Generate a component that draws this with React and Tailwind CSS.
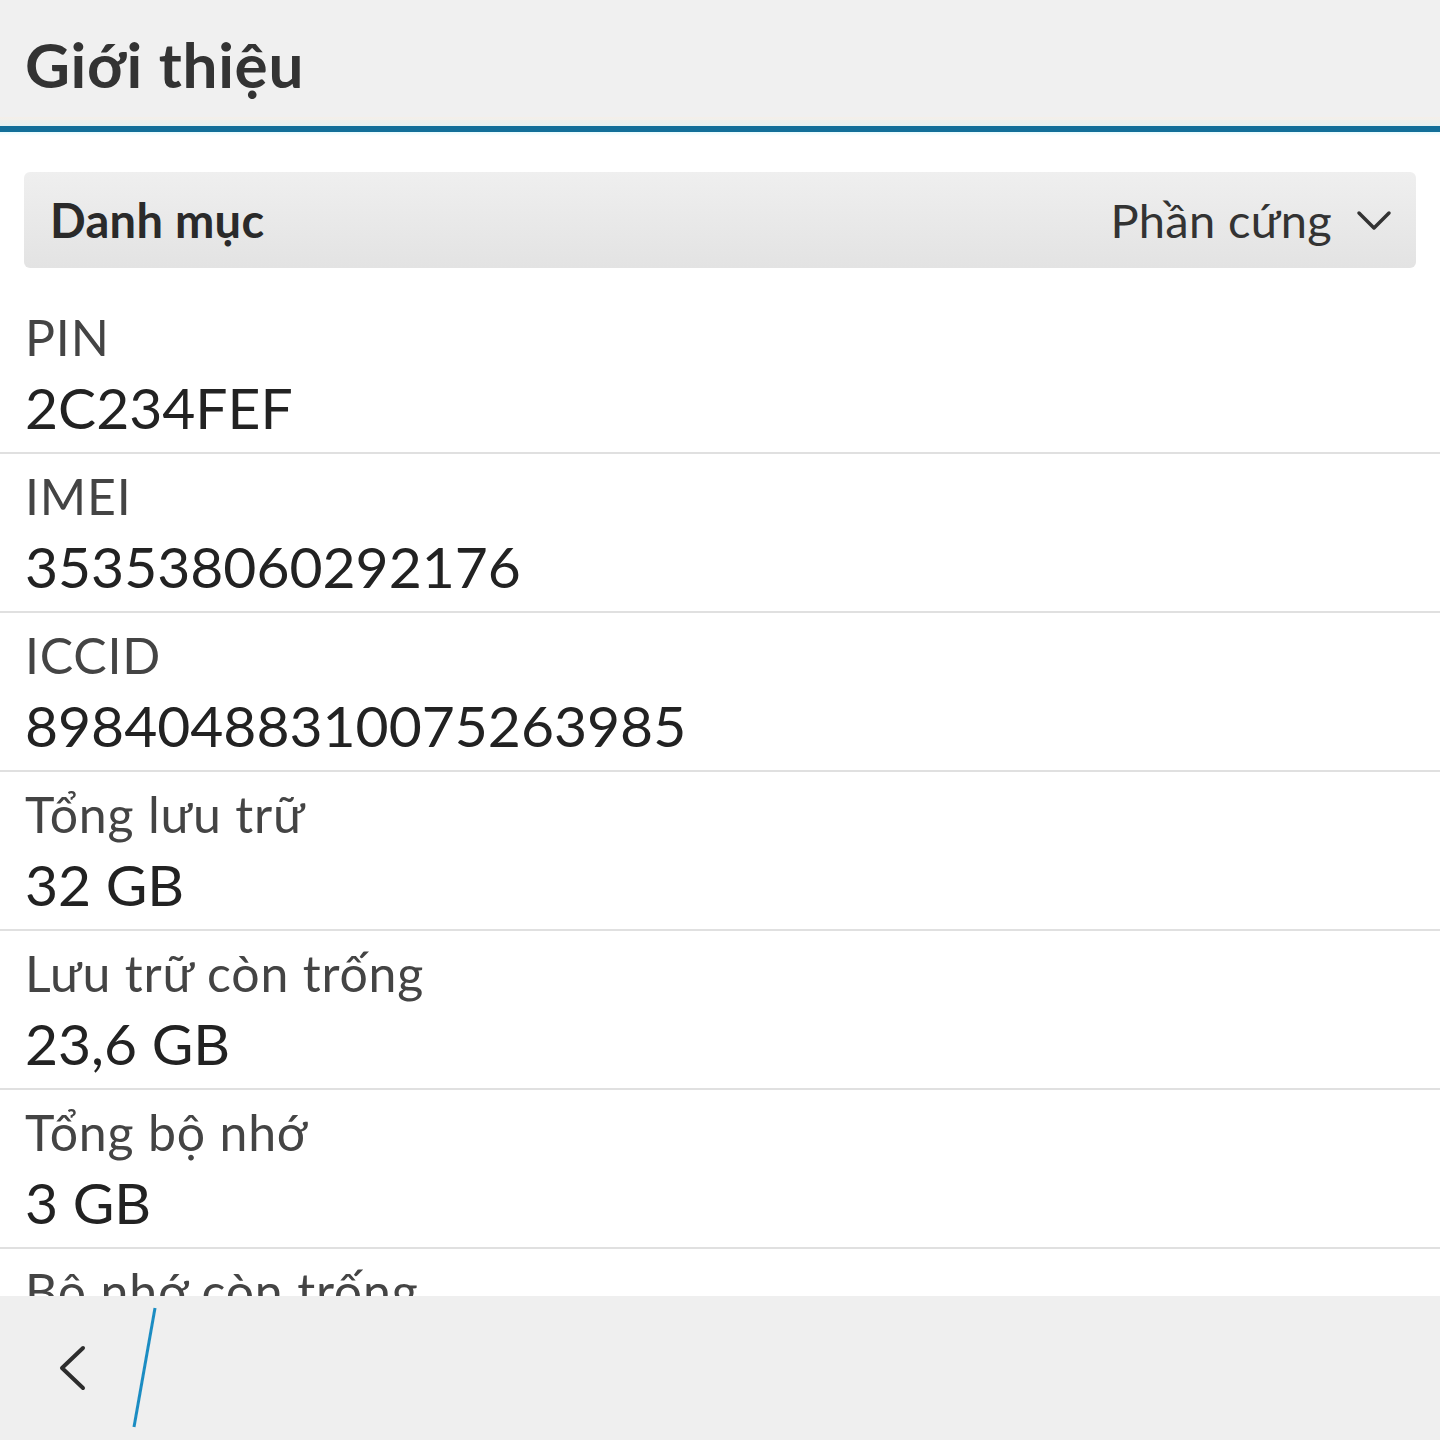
import React from "react";

const rows = [
  ["PIN", "2C234FEF"],
  ["IMEI", "353538060292176"],
  ["ICCID", "89840488310075263985"],
  ["Tổng lưu trữ", "32 GB"],
  ["Lưu trữ còn trống", "23,6 GB"],
  ["Tổng bộ nhớ", "3 GB"],
  ["Bộ nhớ còn trống", "1,2 GB"],
];

export default function App() {
  return (
    <div className="w-[1440px] h-[1440px] flex flex-col bg-white font-['Lato','Open_Sans',sans-serif] overflow-hidden">
      <div className="h-[117px] shrink-0 bg-[#f0f0f0] flex items-start pl-[25px] pt-[33px]">
        <h1 className="text-[62px] font-bold text-[#333333] leading-none tracking-[0.7px]">Giới thiệu</h1>
      </div>
      <div className="h-[9px] shrink-0 bg-gradient-to-b from-[#f5efe9] to-[#e6f2f2]" />
      <div className="h-[6px] shrink-0 bg-[#136f99]" />
      <div className="h-[4px] shrink-0 bg-gradient-to-b from-[#e8fbfd] to-white" />
      <div className="flex-1 min-h-0 overflow-hidden flex flex-col pt-[36px]">
        <div className="shrink-0 mx-[24px] h-[96px] rounded-[6px] bg-gradient-to-b from-[#efefef] to-[#e3e3e3] flex items-center pl-[26px] pr-[24px]">
          <span className="text-[47px] font-bold text-[#2a2a2a] leading-none tracking-[0.3px]">Danh mục</span>
          <span className="ml-auto text-[47px] text-[#333333] leading-none tracking-[0.3px]">Phần cứng</span>
          <svg width="36" height="30" viewBox="0 0 36 30" className="ml-[24px]">
            <path d="M3 8 L18 23 L33 8" fill="none" stroke="#333" strokeWidth="3.5" strokeLinecap="round" strokeLinejoin="round" />
          </svg>
        </div>
        <div className="shrink-0 mt-[25px]">
          {rows.map(([label, value], i) => (
            <div
              key={label}
              className={`h-[159px] shrink-0 flex flex-col pl-[25px] border-t-2 ${i > 0 ? "border-[#e0e0e0]" : "border-transparent"}`}
            >
              <div className="text-[50px] text-[#444444] leading-none mt-[17px] tracking-[0.8px] whitespace-nowrap">{label}</div>
              <div className="text-[57px] text-[#222222] leading-none mt-[17px] whitespace-nowrap">{value}</div>
            </div>
          ))}
        </div>
      </div>
      <div className="h-[144px] shrink-0 bg-[#efefef] flex items-center relative">
        <svg width="40" height="60" viewBox="0 0 40 60" className="ml-[52px]">
          <path d="M31 10 L10 30 L31 50" fill="none" stroke="#2d2d2d" strokeWidth="4" strokeLinecap="round" strokeLinejoin="round" />
        </svg>
        <svg width="30" height="130" viewBox="0 0 30 130" className="absolute left-[130px] top-[10px]">
          <path d="M25 2 L4 121" fill="none" stroke="#1b8cc2" strokeWidth="3" />
        </svg>
      </div>
    </div>
  );
}
